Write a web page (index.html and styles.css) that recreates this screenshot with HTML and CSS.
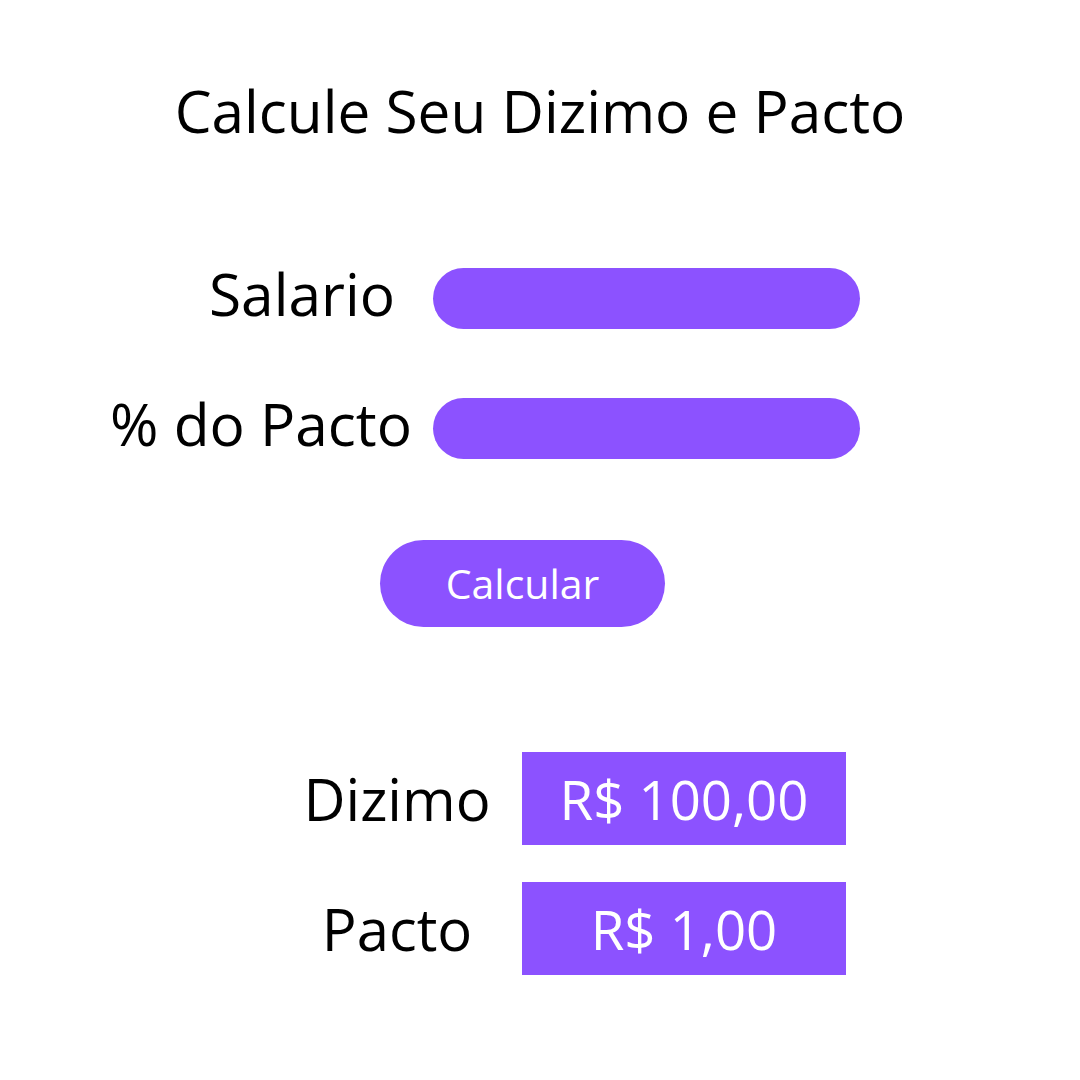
FILE: index.html
```html
<!DOCTYPE html>
<html lang="pt">
<head>
<meta charset="utf-8">
<title>Calcule Seu Dizimo e Pacto</title>
<link rel="stylesheet" href="styles.css">
</head>
<body>
<main class="page">
  <h1 class="title">Calcule Seu Dizimo e Pacto</h1>

  <form class="form">
    <div class="field">
      <label class="field-label field-label--salario" for="salario">Salario</label>
      <input class="field-input" id="salario" type="text">
    </div>
    <div class="field">
      <label class="field-label" for="pacto">% do Pacto</label>
      <input class="field-input" id="pacto" type="text">
    </div>
    <div class="actions">
      <button class="btn" type="button">Calcular</button>
    </div>
  </form>

  <section class="results">
    <div class="result">
      <span class="result-label">Dizimo</span>
      <span class="result-value">R$ 100,00</span>
    </div>
    <div class="result">
      <span class="result-label">Pacto</span>
      <span class="result-value">R$ 1,00</span>
    </div>
  </section>
</main>
</body>
</html>
```

FILE: styles.css
```css
* { box-sizing: border-box; }

html, body {
  margin: 0;
  padding: 0;
  background: #ffffff;
}

body {
  width: 1080px;
  height: 1080px;
  font-family: "Open Sans", "Liberation Sans", sans-serif;
  color: #000000;
  overflow: hidden;
}

.page {
  display: flex;
  flex-direction: column;
  padding-top: 70px;
}

.title {
  margin: 0;
  font-size: 58.5px;
  font-weight: 400;
  line-height: 80px;
  text-align: center;
}

.form {
  display: flex;
  flex-direction: column;
  gap: 69px;
  margin-top: 118px;
}

.field {
  display: flex;
  align-items: flex-start;
  gap: 21px;
}

.field-label {
  width: 412px;
  text-align: right;
  font-size: 58.6px;
  line-height: 51px;
  white-space: nowrap;
}

.field-label--salario {
  padding-right: 17px;
}

.field-input {
  width: 427px;
  height: 61px;
  border: none;
  border-radius: 31px;
  background: #8c52ff;
  outline: none;
  padding: 0;
  margin: 0;
}

.actions {
  display: flex;
  padding-left: 380px;
  margin-top: 12px;
}

.btn {
  width: 285px;
  height: 87px;
  border: none;
  border-radius: 44px;
  background: #8c52ff;
  color: #ffffff;
  font-family: "Open Sans", "Liberation Sans", sans-serif;
  font-size: 41px;
  line-height: 1;
  padding: 0;
  cursor: pointer;
}

.results {
  display: flex;
  flex-direction: column;
  gap: 37px;
  margin-top: 125px;
}

.result {
  display: flex;
  align-items: center;
  padding-left: 297px;
}

.result-label {
  width: 225px;
  padding-right: 25px;
  text-align: center;
  font-size: 58px;
  line-height: 1.2;
}

.result-value {
  width: 324px;
  height: 93px;
  display: flex;
  align-items: center;
  justify-content: center;
  background: #8c52ff;
  color: #ffffff;
  font-size: 54.5px;
}
```
